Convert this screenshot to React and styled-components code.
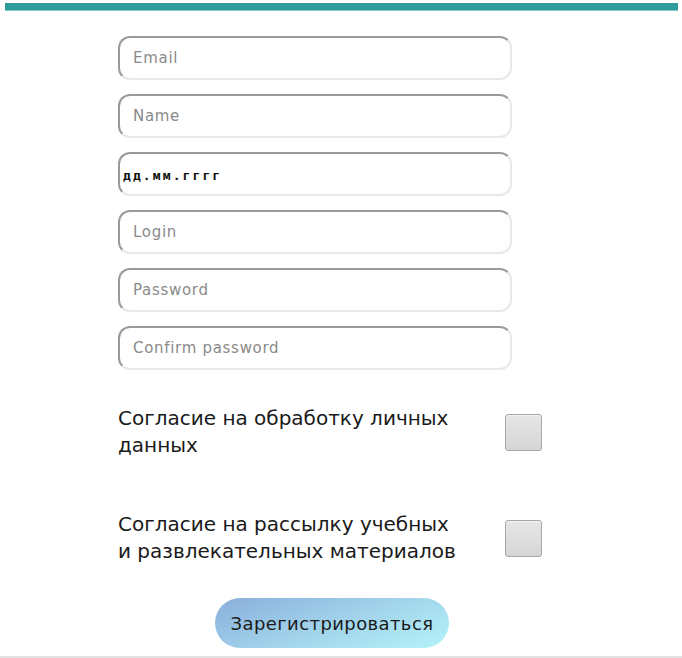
import React from "react";
import styled, { createGlobalStyle } from "styled-components";

const Global = createGlobalStyle`
  html, body { margin: 0; padding: 0; background: #fff; }
  body { font-family: "DejaVu Sans", "Liberation Sans", sans-serif; }
  input::placeholder { color: #8a8a8a; opacity: 1; }
`;

const Page = styled.div`
  width: 682px;
  height: 658px;
  box-sizing: border-box;
  padding: 3px 4px 0 5px;
  display: flex;
  flex-direction: column;
  overflow: hidden;
`;

const TopBar = styled.div`
  flex: none;
  height: 7px;
  background: #2e9c9d;
  border-bottom: 1px solid #86c9c9;
`;

const Form = styled.form`
  display: flex;
  flex-direction: column;
  padding: 25px 0 0 113px;
  flex: 1;
`;

const Fields = styled.div`
  display: flex;
  flex-direction: column;
  gap: 14px;
  width: 394px;
`;

const Input = styled.input`
  box-sizing: border-box;
  height: 44px;
  width: 100%;
  border: 2px solid;
  border-color: #9a9a9a #e8e8e8 #e8e8e8 #9a9a9a;
  border-radius: 12px;
  padding: 0 0 0 13px;
  font-family: "DejaVu Sans", sans-serif;
  font-size: 15px;
  letter-spacing: 0.7px;
  outline: none;
  background: #fff;
`;

const DateBox = styled.div`
  box-sizing: border-box;
  height: 44px;
  width: 100%;
  border: 2px solid;
  border-color: #9a9a9a #e8e8e8 #e8e8e8 #9a9a9a;
  border-radius: 12px;
  padding: 2px 0 0 3px;
  display: flex;
  align-items: center;
  font-family: "DejaVu Sans Mono", "Liberation Mono", monospace;
  font-weight: bold;
  font-size: 13px;
  letter-spacing: 2.1px;
  color: #111;
`;

const Consent = styled.label`
  display: flex;
  align-items: center;
  justify-content: space-between;
  width: 424px;
  margin-top: ${(p) => p.$top}px;
`;

const ConsentText = styled.span`
  width: 340px;
  font-size: 20px;
  line-height: 27px;
  color: #1a1a1a;
`;

const Box = styled.span`
  box-sizing: border-box;
  width: 37px;
  height: 37px;
  border: 1px solid #a8a8a8;
  border-radius: 3px;
  background: linear-gradient(#e6e6e6, #d6d6d6);
  box-shadow: inset 0 1px 0 #f4f4f4;
`;

const ButtonRow = styled.div`
  display: flex;
  padding-left: 97px;
  margin-top: 33px;
`;

const Button = styled.button`
  width: 234px;
  height: 50px;
  border: none;
  border-radius: 25px;
  background: linear-gradient(160deg, #8aaedb 0%, #a3d6ec 55%, #b4f3fa 100%);
  font-family: "DejaVu Sans", sans-serif;
  font-size: 18px;
  letter-spacing: 0.4px;
  color: #1a1a1a;
  cursor: pointer;
`;

const Footer = styled.div`
  height: 2px;
  background: #e2e2e2;
  margin: 6px -4px 0 -5px;
`;

export default function App() {
  return (
    <>
      <Global />
      <Page>
        <TopBar />
        <Form onSubmit={(e) => e.preventDefault()}>
          <Fields>
            <Input placeholder="Email" />
            <Input placeholder="Name" />
            <DateBox>дд.мм.гггг</DateBox>
            <Input placeholder="Login" />
            <Input placeholder="Password" type="password" />
            <Input placeholder="Confirm password" type="password" />
          </Fields>
          <Consent $top={35}>
            <ConsentText>Согласие на обработку личных данных</ConsentText>
            <Box />
          </Consent>
          <Consent $top={52}>
            <ConsentText>Согласие на рассылку учебных и развлекательных материалов</ConsentText>
            <Box />
          </Consent>
          <ButtonRow>
            <Button type="submit">Зарегистрироваться</Button>
          </ButtonRow>
        </Form>
        <Footer />
      </Page>
    </>
  );
}
